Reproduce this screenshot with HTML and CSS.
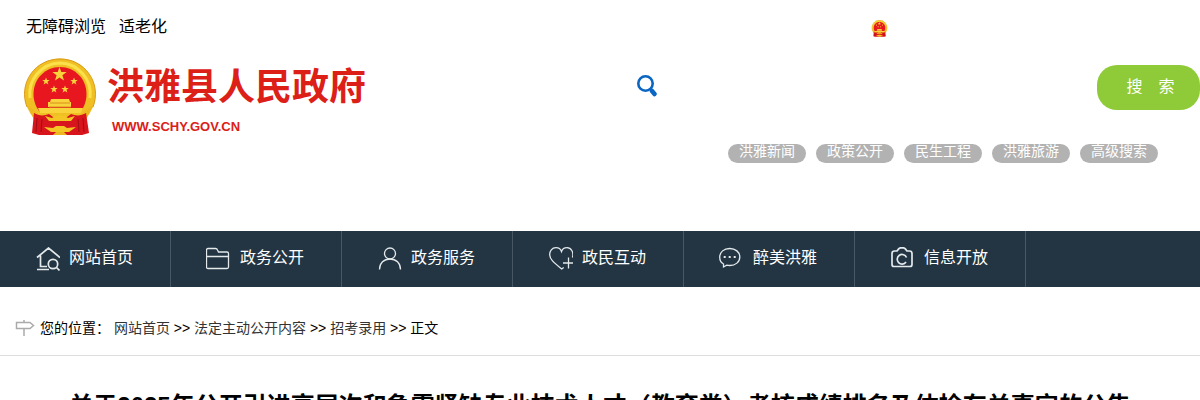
FILE: index.html
```html
<!DOCTYPE html>
<html lang="zh-CN">
<head>
  <meta charset="UTF-8">
  <meta name="viewport" content="width=device-width, initial-scale=1">
  <title>洪雅县人民政府</title>
  <link rel="stylesheet" href="styles.css">
</head>
<body>

  <!-- 国徽 -->
  <svg class="sprite" aria-hidden="true">
    <symbol id="emblem" viewBox="0 0 72 78">
      <circle cx="36" cy="36" r="35.5" fill="#efbf24"/>
      <path d="M36 1A35 35 0 0 0 3 49M36 1a35 35 0 0 1 33 48" fill="none" stroke="#d99a16"/>
      <path d="M6 40A31 31 0 0 1 36 5a31 31 0 0 1 30 35" fill="none" stroke="#fbe04a" stroke-width="3"/>
      <path d="M3 47l10 8 2 10 21-4 21 4 2-10 10-8-9 19H12z" fill="#edb71f"/>
      <path d="M36 9c15 0 26.500 12 26.500 27 0 8-3 14-7 19h-39c-4-5-7-11-7-19C9.500 21 21 9 36 9z" fill="#e8171f"/>
      <g fill="#f9d33c">
        <path d="M35.500 9l1.800 5h5.400l-4.300 3.300 1.600 5.200-4.500-3.100-4.500 3.100 1.600-5.200-4.300-3.300h5.400z"/>
        <path d="M22 19.500l1 2.600h2.700l-2.200 1.700.9 2.700-2.400-1.600-2.400 1.600.9-2.700-2.200-1.700H21z"/>
        <path d="M50 19.500l1 2.600h2.700l-2.200 1.700.9 2.700-2.400-1.600-2.400 1.600.9-2.700-2.200-1.700H49z"/>
        <path d="M30 27.500l1 2.600h2.700l-2.200 1.700.9 2.700-2.400-1.600-2.400 1.600.9-2.700-2.200-1.700H29z"/>
        <path d="M41 27.500l1 2.600h2.700l-2.200 1.700.9 2.700-2.400-1.600-2.400 1.600.9-2.700-2.200-1.700H40z"/>
        <path d="M27 41h18l1 3h1v5H24v-5h2z"/>
        <path d="M14 50h45l-2 5H16z"/>
      </g>
      <path d="M26 45h20M25 49h22" stroke="#d9901a" stroke-width="1"/>
      <path d="M10 55c5 3 10 3 15 1l4 3h14l4-3c5 2 10 2 15-1l3 20-7 2H15l-7-2z" fill="#d8141c"/>
      <path d="M13 60l-1 14M18 61l-1 13M54 61l1 13M59 60l1 14" stroke="#a30c14" stroke-width="1"/>
      <path d="M21 58l7 2 3-2h3l2-2 2 2h3l3 2 7-2-4 5H25z" fill="#f3c625"/>
      <path d="M20 69l9 1 3-2h8l3 2 9-1-7 5H27z" fill="#f3c625"/>
      <path d="M29 77l3-3h8l3 3z" fill="#edb71f"/>
    </symbol>
  </svg>

  <!-- HEADER -->
  <header>
    <div class="topbar">
      <div class="topbar-links">
        <a href="#">无障碍浏览</a>
        <a href="#">适老化</a>
      </div>
      <svg class="topbar-emblem" aria-hidden="true"><use href="#emblem"/></svg>
    </div>

    <div class="banner">
      <a class="logo" href="#">
        <svg class="logo-emblem" aria-hidden="true"><use href="#emblem"/></svg>
        <span class="logo-text">
          <span class="logo-name">洪雅县人民政府</span>
          <span class="logo-url">WWW.SCHY.GOV.CN</span>
        </span>
      </a>
      <div class="search-area">
        <form class="search">
          <svg class="search-icon" viewBox="0 0 20 22" aria-hidden="true">
            <circle cx="8.500" cy="8.500" r="7.200" fill="none" stroke="#0a66c2" stroke-width="2.600"/>
            <path d="M15 16l2.500 3" stroke="#0a66c2" stroke-width="4.500" stroke-linecap="round"/>
          </svg>
          <input type="text" class="search-input" aria-label="搜索">
          <button type="submit" class="search-btn">搜　索</button>
        </form>
        <div class="tags">
          <a href="#">洪雅新闻</a>
          <a href="#">政策公开</a>
          <a href="#">民生工程</a>
          <a href="#">洪雅旅游</a>
          <a href="#">高级搜索</a>
        </div>
      </div>
    </div>
  </header>

  <!-- NAV -->
  <nav>
    <ul>
      <li><a href="#">
        <svg viewBox="0 0 24 24" class="bold"><path d="M1 10.500L12.500 1 24 10.500M4.500 8.500V19.500H11M1 22.500H13"/><circle cx="17" cy="17" r="4.700"/><path d="M20.500 20.500L23.500 23.500"/></svg>
        网站首页</a></li>
      <li><a href="#">
        <svg viewBox="0 0 24 24"><path d="M.5 20V3q0-1.500 1.500-1.500H9.500q1.500 0 2 1.500l1 2H21q1.500 0 1.500 1.500V20q0 1.500-1.500 1.500H2Q.5 21.500.5 20zM.5 9.500H22.500"/></svg>
        政务公开</a></li>
      <li><a href="#">
        <svg viewBox="0 0 24 24"><circle cx="12" cy="6.500" r="5.500"/><path d="M1.500 22.500C1.500 16 6 12 12 12s10.500 4 10.500 10.500"/></svg>
        政务服务</a></li>
      <li><a href="#">
        <svg viewBox="0 0 24 24"><path d="M23.500 10.500C25 5 22 .7 18 .7 15 .7 13 3 12.500 4.500 12 3 10 .7 7 .7 3 .7.500 4 .7 8c.2 4 3.300 7 12 14l2-1.500M19.500 10.500v11M14 16H24"/></svg>
        政民互动</a></li>
      <li><a href="#">
        <svg viewBox="0 0 24 24"><path d="M4.500 17C1.500 15.500.7 13 .7 10 .7 5 5 1.500 10.700 1.500S20.800 5 20.800 10 16.500 18.500 10.700 18.500c-1 0-2-.1-3-.3L4.500 20z"/><path d="M4.700 10h2M9.700 10h2M14.700 10h2" stroke-width="2"/></svg>
        醉美洪雅</a></li>
      <li><a href="#">
        <svg viewBox="0 0 24 24" class="bold"><path d="M3.500 4H6Q8 .8 9.500.8h3q1.500 0 3.500 3.200H18.500Q21 4 21 6.500V17.500q0 2-2 2H3q-2 0-2-2V6.500Q1 4 3.500 4zM15.500 10.500A4.800 4.800 0 1 0 15 15"/></svg>
        信息开放</a></li>
    </ul>
  </nav>

  <!-- 当前位置 -->
  <div class="position">
    <svg class="position-icon" viewBox="0 0 20 18" aria-hidden="true">
      <path d="M1.500 3.500H15l3.500 3-3.500 3H1.500zM9 1v2.500M9 9.500V17" fill="none" stroke="#aaa" stroke-width="1.500"/>
    </svg>
    <p>您的位置： <a href="#">网站首页</a> &gt;&gt; <a href="#">法定主动公开内容</a> &gt;&gt; <a href="#">招考录用</a> &gt;&gt; 正文</p>
  </div>

  <main>
    <h1>关于2025年公开引进高层次和急需紧缺专业技术人才（教育类）考核成绩排名及体检有关事宜的公告</h1>
  </main>

</body>
</html>
```

FILE: styles.css
```css
* {box-sizing:border-box; margin:0; padding:0;}
body {
  font-family:"Liberation Sans","Noto Sans CJK SC",sans-serif;
  font-size:14px; color:#000; background:#fff;
}
a {text-decoration:none; color:inherit;}
ul {list-style:none;}
.sprite {display:none;}

.topbar {
  display:flex; justify-content:space-between; align-items:center;
  height:56px; padding:0 312px 0 26px;
}
.topbar-links {display:flex; gap:13px; font-size:16px; line-height:24px; padding-bottom:3px;}
.topbar-emblem {width:17px; height:17px;}

.banner {
  display:flex; justify-content:space-between;
  height:175px; padding-left:24px;
}
.logo {
  display:flex; align-items:flex-start; gap:11px; padding-top:2px;
  color:#dc2018;
}
.logo-emblem {width:72px; height:78px;}
.logo-text {display:flex; flex-direction:column; font-weight:700;}
.logo-name {font-size:37px; line-height:60px;}
.logo-url {font-size:13px; line-height:18px; padding-left:5px;}

.search-area {width:48%; padding-top:9px;}
.search {display:flex; align-items:center; height:45px;}
.search-icon {flex:none; width:20px; height:22px; margin:0 10px 4px 1px;}
.search-input {
  flex:1; min-width:0; height:45px;
  border:none; outline:none; background:#fff; font-size:16px;
}
.search-btn {
  width:103px; height:45px; padding:0 0 6px 4px;
  border:none; border-radius:20px; background:#8fcb38; color:#fff;
  font-family:inherit; font-size:16px; cursor:pointer;
}
.tags {display:flex; justify-content:flex-end; gap:10px; padding:34px 42px 0 0;}
.tags a {
  width:78px; height:19px; border-radius:10px;
  background:#b2b2b2; color:#fff; text-align:center; line-height:15px;
}

nav {background:#233543;}
nav ul {display:flex;}
nav li {width:171px; border-right:1px solid #475864;}
nav a {
  display:flex; align-items:center; gap:9px;
  height:56px; padding:0 0 6px 36px; color:#fff; font-size:16px;
}
nav svg {
  width:24px; height:24px; margin-top:5px; fill:none; stroke:#e4e9ec; stroke-width:1.3;
}
nav svg.bold {stroke-width:1.7;}
nav li:nth-child(2) a,
nav li:nth-child(5) a {padding-left:35px; gap:10px;}

.position {
  display:flex; align-items:center; gap:5px;
  height:69px; padding:11px 15px 0; border-bottom:1px solid #ddd;
}
.position-icon {width:20px; height:18px; margin-top:2px;}
.position a {color:#333;}

main {padding:32px 15px;}
h1 {font-size:24px; line-height:36px; text-align:center;}
```
